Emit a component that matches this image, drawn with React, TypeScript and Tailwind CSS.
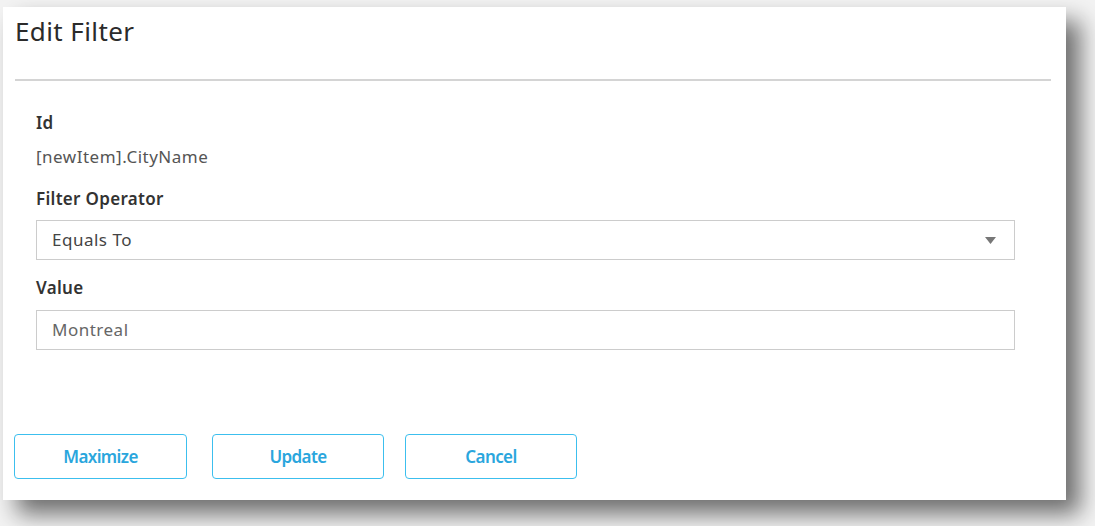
const FONT = "font-['Noto_Sans','Open_Sans',sans-serif]";

const FieldLabel = ({ children }: { children: string }) => (
    <div className="text-[17px] leading-[24px] tracking-[0.3px] font-semibold text-[#333333]">{children}</div>
);

const ActionButton = ({ label, className }: { label: string; className?: string }) => (
    <button
        className={`h-[45px] w-[172px] rounded-[4px] border-[1.5px] border-[#3cbfee] bg-white text-[17px] tracking-[-0.6px] font-semibold text-[#2aa6dd] ${className ?? ""}`}
    >
        {label}
    </button>
);

export default function App() {
    return (
        <div className={`w-[1095px] h-[526px] bg-[#f3f3f3] pl-[3px] pt-[7px] ${FONT}`}>
            <div className="w-[1063px] h-[493px] bg-white shadow-[14px_14px_22px_rgba(0,0,0,0.55)] flex flex-col">
                {/* header */}
                <div className="pt-[8px] pl-[12px] text-[26px] leading-[32px] tracking-[0.4px] text-[#2b2b2b]">Edit Filter</div>
                <div className="mt-[32px] ml-[12px] mr-[15px] h-[2px] bg-[#d4d4d4]"/>

                {/* form */}
                <div className="pl-[33px] pr-[51px] mt-[30px] flex flex-col">
                    <FieldLabel>Id</FieldLabel>
                    <div className="mt-[10px] text-[17px] leading-[24px] tracking-[0.5px] text-[#555555]">[newItem].CityName</div>
                    <div className="mt-[18px]">
                        <FieldLabel>Filter Operator</FieldLabel>
                    </div>
                    <div
                        className="mt-[9px] h-[40px] border border-[#cccccc] flex items-center justify-between pl-[15px] pr-[18px] text-[17px] tracking-[0.5px] text-[#444444]">
                        <span>Equals To</span>
                        <svg width="11" height="7" viewBox="0 0 11 7">
                            <path d="M0 0 L11 0 L5.5 7 Z" fill="#777777"/>
                        </svg>
                    </div>
                    <div className="mt-[16px]">
                        <FieldLabel>Value</FieldLabel>
                    </div>
                    <div
                        className="mt-[10px] h-[40px] border border-[#cccccc] flex items-center pl-[15px] text-[17px] tracking-[0.5px] text-[#666666]">
                        Montreal
                    </div>
                </div>

                {/* buttons */}
                <div className="mt-[84px] pl-[11px] flex flex-row">
                    <ActionButton label="Maximize" className="w-[173px]"/>
                    <ActionButton label="Update" className="ml-[25px]"/>
                    <ActionButton label="Cancel" className="ml-[21px]"/>
                </div>
            </div>
        </div>
    );
}
